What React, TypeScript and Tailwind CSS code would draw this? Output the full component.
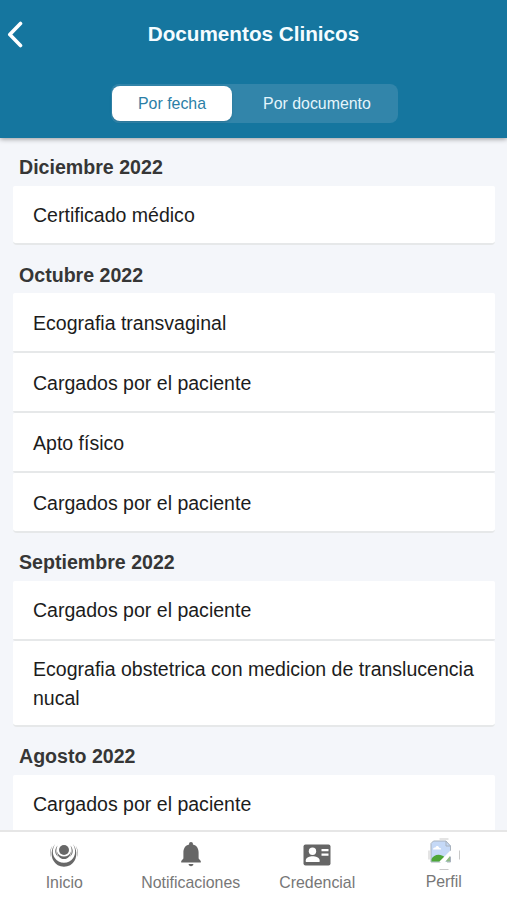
import clsx from "clsx";
import { useState } from "react";

type Section = {
  title: string;
  documents: string[];
};

const sections: Section[] = [
  { title: "Diciembre 2022", documents: ["Certificado médico"] },
  {
    title: "Octubre 2022",
    documents: [
      "Ecografia transvaginal",
      "Cargados por el paciente",
      "Apto físico",
      "Cargados por el paciente",
    ],
  },
  {
    title: "Septiembre 2022",
    documents: [
      "Cargados por el paciente",
      "Ecografia obstetrica con medicion de translucencia nucal",
    ],
  },
  { title: "Agosto 2022", documents: ["Cargados por el paciente"] },
];

function HomeIcon() {
  return (
    <svg width="28" height="26" viewBox="0 0 28 26" fill="#686868">
      <circle cx="14" cy="8" r="5" />
      <path d="M7.200 9.500c.8 3.200 3.500 5 6.800 5s6-1.800 6.800-5c.2 4.200-2.700 7.600-6.800 7.600s-7-3.400-6.800-7.600Z" />
      <path d="M5.200 2C2.300 6.500 2 12 4.800 16c2 3 5.400 4.700 9.200 4.700s7.200-1.700 9.200-4.700c2.800-4 2.500-9.500-.4-14 4.200 5 4.500 12 1.700 16.800-2.200 3.800-6 5.900-10.500 5.900s-8.300-2.100-10.500-5.900C.7 14 1 7 5.200 2Z" />
      <path d="M7.600 3.500C5.500 8 6.200 12.500 8.600 15 4.800 12.800 4 7.500 7.600 3.500ZM20.400 3.500c2.100 4.500 1.400 9-1 11.500 3.800-2.200 4.600-7.500 1-11.500Z" />
      <path d="M2.300 4C.2 8 .1 12 1.200 15.500-.5 12-.3 7.500 2.300 4ZM25.700 4c2.100 4 2.200 8 1.100 11.500C28.500 12 28.300 7.500 25.700 4Z" />
    </svg>
  );
}

function BellIcon() {
  return (
    <svg width="22" height="26" viewBox="0 0 22 26" fill="#666">
      <path d="M11 0c1.200 0 1.900.8 1.900 1.800v.7c3.800.9 5.700 4 5.700 7.900v6l2.200 2.500v1.500H1.200v-1.500l2.200-2.500v-6c0-3.900 1.900-7 5.700-7.900v-.7C9.100.8 9.800 0 11 0Z" />
      <path d="M8.600 22h4.800c0 1.300-1 2.200-2.400 2.200S8.600 23.300 8.600 22Z" />
    </svg>
  );
}

function CredentialIcon() {
  return (
    <svg width="28" height="22" viewBox="0 0 28 22">
      <rect x=".5" y=".5" width="27" height="21" rx="2" fill="#666" />
      <circle cx="9.500" cy="7.200" r="3.700" fill="#fff" />
      <path
        d="M2.800 18v-1.700c0-2.600 4-4 6.900-4s6.900 1.400 6.900 4V18Z"
        fill="#fff"
      />
      <path d="M18.500 5h7v2.200h-7zM18.500 9.600h7v2.200h-7z" fill="#fff" />
    </svg>
  );
}

function ProfileIcon() {
  return (
    <svg width="34" height="34" viewBox="0 0 34 34" fill="none">
      <path d="M4 5.500 6.500 3H19l4.500 4.500V24H4Z" fill="#c5d9f7" />
      <path
        d="M15 24H4V5.500L6.500 3H19M19 3v5h4.500L19 3ZM23.500 8v5M23.500 18v6H20"
        stroke="#a9b2bd"
        strokeWidth="1"
      />
      <path
        d="M6 11.500c0-1.500 1.200-2.300 2.400-1.900.5-2.300 3.400-2.100 3.700.2 1.500-.1 2 .8 2 1.700Z"
        fill="#fff"
      />
      <path
        d="M4.500 23.500V21c2-4.500 9-6 13.500-1.500l-5 4Z"
        fill="#4da637"
      />
      <path d="m14 25 11-11" stroke="#fff" strokeWidth="4.500" />
      <path d="M23 18v5.500h-4.500Z" fill="#8fb884" />
      <path
        d="M12.500 1h9M12.500 31.500h9M2 12.500v9M32.500 12.500v9"
        stroke="#c9c9c9"
        strokeWidth="1"
      />
    </svg>
  );
}

const tabs = [
  { label: "Inicio", icon: <HomeIcon /> },
  { label: "Notificaciones", icon: <BellIcon /> },
  { label: "Credencial", icon: <CredentialIcon /> },
  { label: "Perfil", icon: <ProfileIcon /> },
];

export default function App() {
  const [filter, setFilter] = useState("Por fecha");

  return (
    <div className="flex h-[900px] w-[507px] flex-col overflow-hidden bg-[#f4f6fa] font-['Liberation_Sans',Arial,sans-serif]">
      <header className="z-10 h-[137.500px] shrink-0 bg-[#15769f] shadow-[0_1px_5px_rgba(0,0,0,0.4)]">
        <div className="grid h-[68px] grid-cols-[40px_1fr_40px] items-center">
          <button aria-label="Volver" className="pl-[7px]">
            <svg width="18" height="28" viewBox="0 0 18 28" fill="none">
              <path
                d="M13.500 3.500 2.800 14.500l10.700 11"
                stroke="#fff"
                strokeWidth="3.600"
                strokeLinecap="round"
                strokeLinejoin="round"
              />
            </svg>
          </button>
          <h1 className="text-center text-[20.700px] font-bold text-[#f4fcff]">
            Documentos Clinicos
          </h1>
        </div>
        <div className="ml-[111px] mt-4 flex h-[39px] w-[287px] items-center rounded-lg bg-[#3285aa] pl-px">
          {["Por fecha", "Por documento"].map((item) => (
            <button
              key={item}
              onClick={() => setFilter(item)}
              className={clsx(
                "h-[35px] rounded-lg pt-px text-[15.900px]",
                item === "Por fecha" ? "w-[120px]" : "flex-1 pl-1",
                filter === item
                  ? "bg-white text-[#2b7ea6] shadow-sm"
                  : "text-[#e4f5fc]"
              )}
            >
              {item}
            </button>
          ))}
        </div>
      </header>

      <main className="min-h-0 flex-1 overflow-hidden px-[13px]">
        {sections.map((section) => (
          <section key={section.title}>
            <h2 className="flex h-12 items-center pt-3 pl-1.5 text-[19.600px] font-bold text-[#363636]">
              {section.title}
            </h2>
            <ul>
              {section.documents.map((doc, i) => (
                <li
                  key={i}
                  className="flex min-h-[59.900px] w-[482px] items-center rounded-[2px] border-b-2 border-[#e6e8e9] bg-white pt-3.5 pr-3 pb-3 pl-5 text-[19.550px] leading-[29px] text-[#1c1c1c] last:rounded-b-[4px]"
                >
                  {doc}
                </li>
              ))}
            </ul>
          </section>
        ))}
      </main>

      <nav className="grid h-[70px] shrink-0 grid-cols-4 border-t-2 border-[#e6e6e6] bg-white pl-px">
        {tabs.map((tab) => (
          <button key={tab.label} className="flex flex-col items-center">
            <span className="flex h-[42px] items-center justify-center pt-1">
              {tab.icon}
            </span>
            <span
              className={clsx(
                "text-[15.900px] leading-4 text-[#777]",
                tab.label !== "Perfil" && "pt-px"
              )}
            >
              {tab.label}
            </span>
          </button>
        ))}
      </nav>
    </div>
  );
}
